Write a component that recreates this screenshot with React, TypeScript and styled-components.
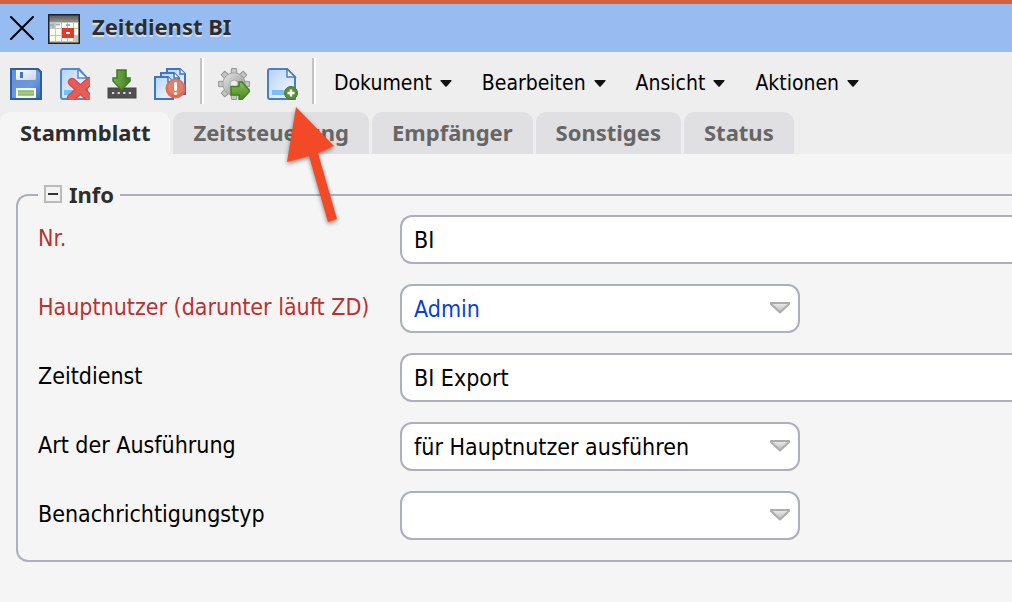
import React, { useState } from "react";
import type { ReactNode } from "react";
import styled, { createGlobalStyle } from "styled-components";

const line = "#adb0bb";
const boldFont = '"Noto Sans", sans-serif';

const GlobalStyle = createGlobalStyle`
  *, *::before, *::after { box-sizing: border-box; }
  body {
    margin: 0;
    background: #f5f5f5;
    color: #000;
    font-family: "DejaVu Sans Condensed", "Noto Sans", sans-serif;
    font-size: 23px;
    line-height: 28px;
  }
  button, input, select { font: inherit; color: inherit; }
`;

const Page = styled.div`
  position: relative;
  min-height: 100vh;
  overflow-x: hidden;
`;

const Header = styled.header`
  display: flex;
  align-items: center;
  height: 52px;
  padding: 0 10px;
  background: #96bcf1;
  border-top: 4px solid #d65f42;
`;

const IconButton = styled.button`
  display: flex;
  flex: none;
  padding: 0;
  border: 0;
  background: none;
  cursor: pointer;
  svg { display: block; }
`;

const HeaderIcon = styled.span`
  display: flex;
  margin: 2px 12px 0 14px;
`;

const Title = styled.h1`
  margin: 0;
  padding-bottom: 4px;
  color: #2d2d2d;
  font-family: ${boldFont};
  font-size: 22px;
  line-height: 28px;
  text-shadow: 0 2px 1px rgba(255, 255, 255, 0.6);
`;

const Toolbar = styled.div`
  display: flex;
  align-items: center;
  height: 60px;
  padding: 0 10px;
  background: #eeeeee;
`;

const IconGroup = styled.div`
  display: flex;
  align-items: center;
  gap: 16px;
  margin-top: 4px;
`;

const Separator = styled.span`
  flex: none;
  width: 4px;
  height: 46px;
  margin: 0 14px 2px;
  background: linear-gradient(to right, #c4c4c4 50%, #fff 50%);
`;

const Menus = styled.nav`
  display: flex;
  gap: 30px;
  margin: 2px 0 0 4px;
`;

const MenuButton = styled.button`
  display: flex;
  align-items: center;
  gap: 8px;
  padding: 0;
  border: 0;
  background: none;
  font-size: 21px;
  white-space: nowrap;
  cursor: pointer;
`;

const TabBar = styled.div`
  display: flex;
  gap: 3px;
  background: #eeeeee;
`;

const Tab = styled.button<{ $active: boolean }>`
  height: 42px;
  padding: 0 20px 2px;
  border: 0;
  border-radius: 10px 10px 0 0;
  background: ${(p) => (p.$active ? "#f5f5f5" : "#e0e0e2")};
  color: ${(p) => (p.$active ? "#2d2d2d" : "#666")};
  font-family: ${boldFont};
  font-size: 22px;
  font-weight: 700;
  cursor: pointer;
`;

const Content = styled.main`
  padding: 26px 0 40px 16px;
`;

const Group = styled.fieldset`
  min-width: 0;
  margin: 0;
  padding: 5px 0 20px 20px;
  border: 2px solid ${line};
  border-right: 0;
  border-radius: 12px 0 0 12px;
`;

const Legend = styled.legend`
  display: flex;
  align-items: center;
  gap: 7px;
  padding: 0 6px 2px;
  color: #2d2d2d;
  font-family: ${boldFont};
  font-size: 22px;
  font-weight: 700;
`;

const Rows = styled.div`
  display: grid;
  gap: 20px;
`;

const Row = styled.div`
  display: grid;
  grid-template-columns: 362px 1fr;
`;

const Label = styled.label<{ $required?: boolean }>`
  padding-top: 9px;
  color: ${(p) => (p.$required ? "#b9322f" : "#000")};
`;

const TextField = styled.input`
  width: 100%;
  height: 49px;
  padding: 0 12px;
  border: 2px solid ${line};
  border-right: 0;
  border-radius: 12px 0 0 12px;
  background: #fff;
  outline: none;
`;

const SelectBox = styled.div`
  position: relative;
  max-width: 400px;
  svg {
    position: absolute;
    top: 16px;
    right: 8px;
    pointer-events: none;
  }
`;

const Select = styled.select<{ $link?: boolean }>`
  appearance: none;
  display: block;
  width: 100%;
  height: 49px;
  padding: 0 40px 0 12px;
  border: 2px solid ${line};
  border-radius: 12px;
  background: #fff;
  color: ${(p) => (p.$link ? "#0a3fd0" : "#000")};
  outline: none;
`;

const Pointer = styled.svg`
  position: absolute;
  top: 100px;
  left: 280px;
  pointer-events: none;
  filter: drop-shadow(0 2px 2px rgba(0, 0, 0, 0.45));
`;

const CloseIcon = () => (
  <svg width="24" height="24" viewBox="0 0 24 24" stroke="#000" strokeWidth="2" strokeLinecap="round">
    <path d="M1 1 23 23M23 1 1 23" />
  </svg>
);

const CalendarIcon = () => (
  <svg width="32" height="30" viewBox="0 0 32 30">
    <defs>
      <linearGradient id="calTop" x2="0" y2="1">
        <stop offset="0" stopColor="#5c5c5c" />
        <stop offset="1" stopColor="#969696" />
      </linearGradient>
    </defs>
    <rect width="32" height="30" fill="#222" />
    <rect x="1.500" y="1.500" width="29" height="7" fill="url(#calTop)" />
    <rect x="1.500" y="8" width="29" height="20.500" fill="#c6c6b4" />
    <g fill="#fffff0">
      <rect x="8" y="9" width="5" height="5" /><rect x="14" y="9" width="5" height="5" />
      <rect x="20" y="9" width="5" height="5" /><rect x="26" y="9" width="4" height="5" />
      <rect x="2" y="15" width="5" height="6" /><rect x="8" y="15" width="5" height="6" />
      <rect x="14" y="15" width="5" height="6" /><rect x="26" y="15" width="4" height="6" />
      <rect x="2" y="22" width="5" height="5" /><rect x="8" y="22" width="5" height="5" />
      <rect x="14" y="22" width="5" height="5" /><rect x="20" y="22" width="5" height="5" />
    </g>
    <path d="M2 11h3v3M8 10.500h4M18 11h4" stroke="#8db4ea" strokeWidth="2" fill="none" />
    <rect x="16" y="16" width="8" height="6" fill="#fff" stroke="#e2392e" strokeWidth="4" />
  </svg>
);

const SaveIcon = () => (
  <svg width="32" height="32" viewBox="0 0 32 32">
    <defs>
      <linearGradient id="saveBody" x2="1" y2="1">
        <stop offset="0" stopColor="#5f8fd8" />
        <stop offset="0.6" stopColor="#6d9ada" />
        <stop offset="1" stopColor="#3c69b4" />
      </linearGradient>
      <linearGradient id="saveTop" x2="1" y2="1">
        <stop offset="0" stopColor="#fff" />
        <stop offset="1" stopColor="#c5d4ea" />
      </linearGradient>
    </defs>
    <path d="M1 1h27l3 3v27H1z" fill="url(#saveBody)" stroke="#2e5da8" strokeWidth="2" />
    <path d="M6 2h20v9q0 1-1 1H7q-1 0-1-1z" fill="url(#saveTop)" />
    <rect x="10" y="4" width="3" height="6" fill="#4273bd" />
    <rect x="6" y="20" width="20" height="10" fill="#f4f8ee" />
    <path d="M8 23.500h16M8 26.500h16" stroke="#8db96a" strokeWidth="2.400" />
  </svg>
);

const SheetGradient = ({ id }: { id: string }) => (
  <defs>
    <linearGradient id={id} x2="1" y2="1">
      <stop offset="0" stopColor="#b4d2f6" />
      <stop offset="0.7" stopColor="#e4effc" />
      <stop offset="1" stopColor="#cfe2f8" />
    </linearGradient>
  </defs>
);

const DeleteIcon = () => (
  <svg width="32" height="32" viewBox="0 0 32 32">
    <SheetGradient id="sheetDelete" />
    <path d="M5 1h16l8 9v21H5q-2 0-2-2V3q0-2 2-2z" fill="url(#sheetDelete)" stroke="#5587cb" strokeWidth="2" />
    <path d="M20 1v9h9z" fill="#fff" stroke="#5587cb" strokeWidth="1.500" />
    <path d="M6 22h9v5H6z" fill="#72bdf5" />
    <path d="M14 14 32 30.500M32 13 13 30" stroke="#dc4643" strokeWidth="8.500" strokeLinecap="round" />
    <path d="M14 14 32 30.500M32 13 13 30" stroke="#e85c57" strokeWidth="6" strokeLinecap="round" />
  </svg>
);

const DownloadIcon = () => (
  <svg width="32" height="32" viewBox="0 0 32 32">
    <defs>
      <linearGradient id="arrowDown" x2="1" y2="0">
        <stop offset="0" stopColor="#79ae4e" />
        <stop offset="1" stopColor="#42801f" />
      </linearGradient>
    </defs>
    <rect x="2" y="20" width="28" height="10" fill="#505050" stroke="#444" />
    <path d="M6 25h20" stroke="#d8d8d8" strokeWidth="2.200" strokeDasharray="2.200 3.400" />
    <path d="M11 2h9v8h4v3l-8.500 9L7 13v-3h4z" fill="url(#arrowDown)" stroke="#3f7a22" strokeWidth="1.500" />
  </svg>
);

const CopiesIcon = () => (
  <svg width="32" height="32" viewBox="0 0 32 32">
    <SheetGradient id="sheetCopies" />
    <g fill="url(#sheetCopies)" stroke="#3d74c4" strokeWidth="2">
      <path d="M13 1h13l5 5v20H13z" />
      <path d="M7 5h13l5 5v18H7z" />
      <path d="M1 9h13l5 5v17H1z" />
    </g>
    <path d="M14 9v5h5M20 5v5h5M26 1v5h5" fill="#fff" stroke="#3d74c4" strokeWidth="1.500" />
    <circle cx="21.500" cy="20.500" r="10" fill="#db694f" opacity="0.95" />
    <circle cx="21.500" cy="19.500" r="7.500" fill="#e88d75" opacity="0.6" />
    <path d="M21.500 15.500v6" stroke="#fff" strokeWidth="3" strokeLinecap="round" />
    <circle cx="21.500" cy="25.500" r="1.600" fill="#fff" />
  </svg>
);

const teeth = [0, 45, 90, 135, 180, 225, 270, 315];

const GearIcon = () => (
  <svg width="32" height="32" viewBox="0 0 32 32">
    <defs>
      <linearGradient id="gear" x2="1" y2="1">
        <stop offset="0" stopColor="#d8d8d8" />
        <stop offset="1" stopColor="#999" />
      </linearGradient>
      <linearGradient id="arrowRight" x2="0" y2="1">
        <stop offset="0" stopColor="#8abb5c" />
        <stop offset="1" stopColor="#4b8826" />
      </linearGradient>
    </defs>
    <g fill="#c6c6c6" stroke="#979797">
      {teeth.map((angle) => (
        <path key={angle} d="M13 8l.5-7.500h5l.5 7.500z" transform={`rotate(${angle} 16 16)`} />
      ))}
    </g>
    <circle cx="16" cy="16" r="7.500" fill="none" stroke="#979797" strokeWidth="8" />
    <circle cx="16" cy="16" r="7.500" fill="none" stroke="url(#gear)" strokeWidth="6.600" />
    <path d="M13 18.500h8v-4.500h3l8 9-8 8.500h-3V27h-8z" fill="url(#arrowRight)" stroke="#44801f" strokeWidth="1.500" />
  </svg>
);

const AddSheetIcon = () => (
  <svg width="32" height="32" viewBox="0 0 32 32">
    <SheetGradient id="sheetAdd" />
    <path d="M4 1h17l8 8v22H4q-2 0-2-2V3q0-2 2-2z" fill="url(#sheetAdd)" stroke="#4a7dc6" strokeWidth="2" />
    <path d="M21 1v8h8z" fill="#fff" stroke="#4a7dc6" strokeWidth="1.500" />
    <path d="M6 22h12v5H6z" fill="#7ebcf5" />
    <circle cx="25" cy="25" r="6.500" fill="#5b8f37" stroke="#477525" />
    <path d="M25 21.500v7M21.500 25h7" stroke="#fff" strokeWidth="2.400" />
  </svg>
);

const Caret = () => (
  <svg width="12" height="7" viewBox="0 0 12 7">
    <path d="M1 0h10q1 0 .5 1L6.700 6.500q-.7.7-1.400 0L.5 1Q0 0 1 0z" fill="#111" />
  </svg>
);

const SelectArrow = () => (
  <svg width="24" height="16" viewBox="0 0 24 16">
    <defs>
      <linearGradient id="selectArrow" x2="0" y2="1">
        <stop offset="0" stopColor="#ececec" />
        <stop offset="1" stopColor="#bbb" />
      </linearGradient>
    </defs>
    <path d="M3 3h18v1L12 12.500 3 4z" fill="url(#selectArrow)" stroke="#acacac" strokeWidth="2" strokeLinejoin="round" />
  </svg>
);

const CollapseIcon = () => (
  <svg width="18" height="18" viewBox="0 0 18 18">
    <rect x="1" y="1" width="16" height="16" fill="#f3f3f3" stroke="#bababa" strokeWidth="2" />
    <path d="M4 9h10" stroke="#333" strokeWidth="2" />
  </svg>
);

const tabs = ["Stammblatt", "Zeitsteuerung", "Empfänger", "Sonstiges", "Status"];
const menus = ["Dokument", "Bearbeiten", "Ansicht", "Aktionen"];

interface FieldProps {
  id: string;
  label: string;
  required?: boolean;
  children: ReactNode;
}

const Field = ({ id, label, required, children }: FieldProps) => (
  <Row>
    <Label htmlFor={id} $required={required}>{label}</Label>
    {children}
  </Row>
);

interface DropDownProps {
  id: string;
  value: string;
  link?: boolean;
}

const DropDown = ({ id, value, link }: DropDownProps) => (
  <SelectBox>
    <Select id={id} defaultValue={value} $link={link}>
      <option value={value}>{value}</option>
    </Select>
    <SelectArrow />
  </SelectBox>
);

export default function App() {
  const [active, setActive] = useState(tabs[0]);
  const [open, setOpen] = useState(true);

  return (
    <Page>
      <GlobalStyle />
      <Header>
        <IconButton aria-label="Schließen"><CloseIcon /></IconButton>
        <HeaderIcon><CalendarIcon /></HeaderIcon>
        <Title>Zeitdienst BI</Title>
      </Header>
      <Toolbar>
        <IconGroup>
          <IconButton aria-label="Speichern"><SaveIcon /></IconButton>
          <IconButton aria-label="Löschen"><DeleteIcon /></IconButton>
          <IconButton aria-label="Herunterladen"><DownloadIcon /></IconButton>
          <IconButton aria-label="Kopien"><CopiesIcon /></IconButton>
        </IconGroup>
        <Separator />
        <IconGroup>
          <IconButton aria-label="Ausführen"><GearIcon /></IconButton>
          <IconButton aria-label="Neu"><AddSheetIcon /></IconButton>
        </IconGroup>
        <Separator />
        <Menus>
          {menus.map((name) => (
            <MenuButton key={name}>{name}<Caret /></MenuButton>
          ))}
        </Menus>
      </Toolbar>
      <TabBar role="tablist">
        {tabs.map((name) => (
          <Tab key={name} role="tab" aria-selected={name === active} $active={name === active} onClick={() => setActive(name)}>
            {name}
          </Tab>
        ))}
      </TabBar>
      <Content>
        <Group>
          <Legend>
            <IconButton aria-label="Einklappen" aria-expanded={open} onClick={() => setOpen(!open)}>
              <CollapseIcon />
            </IconButton>
            Info
          </Legend>
          {open && (
            <Rows>
              <Field id="nr" label="Nr." required><TextField id="nr" defaultValue="BI" /></Field>
              <Field id="user" label="Hauptnutzer (darunter läuft ZD)" required><DropDown id="user" value="Admin" link /></Field>
              <Field id="service" label="Zeitdienst"><TextField id="service" defaultValue="BI Export" /></Field>
              <Field id="mode" label="Art der Ausführung"><DropDown id="mode" value="für Hauptnutzer ausführen" /></Field>
              <Field id="notify" label="Benachrichtigungstyp"><DropDown id="notify" value="" /></Field>
            </Rows>
          )}
        </Group>
      </Content>
      <Pointer width="64" height="130" viewBox="0 0 64 130">
        <path d="M16 7 54 46 38 53 57 119 48 122 29 56 7 62z" fill="#f24a26" />
      </Pointer>
    </Page>
  );
}
